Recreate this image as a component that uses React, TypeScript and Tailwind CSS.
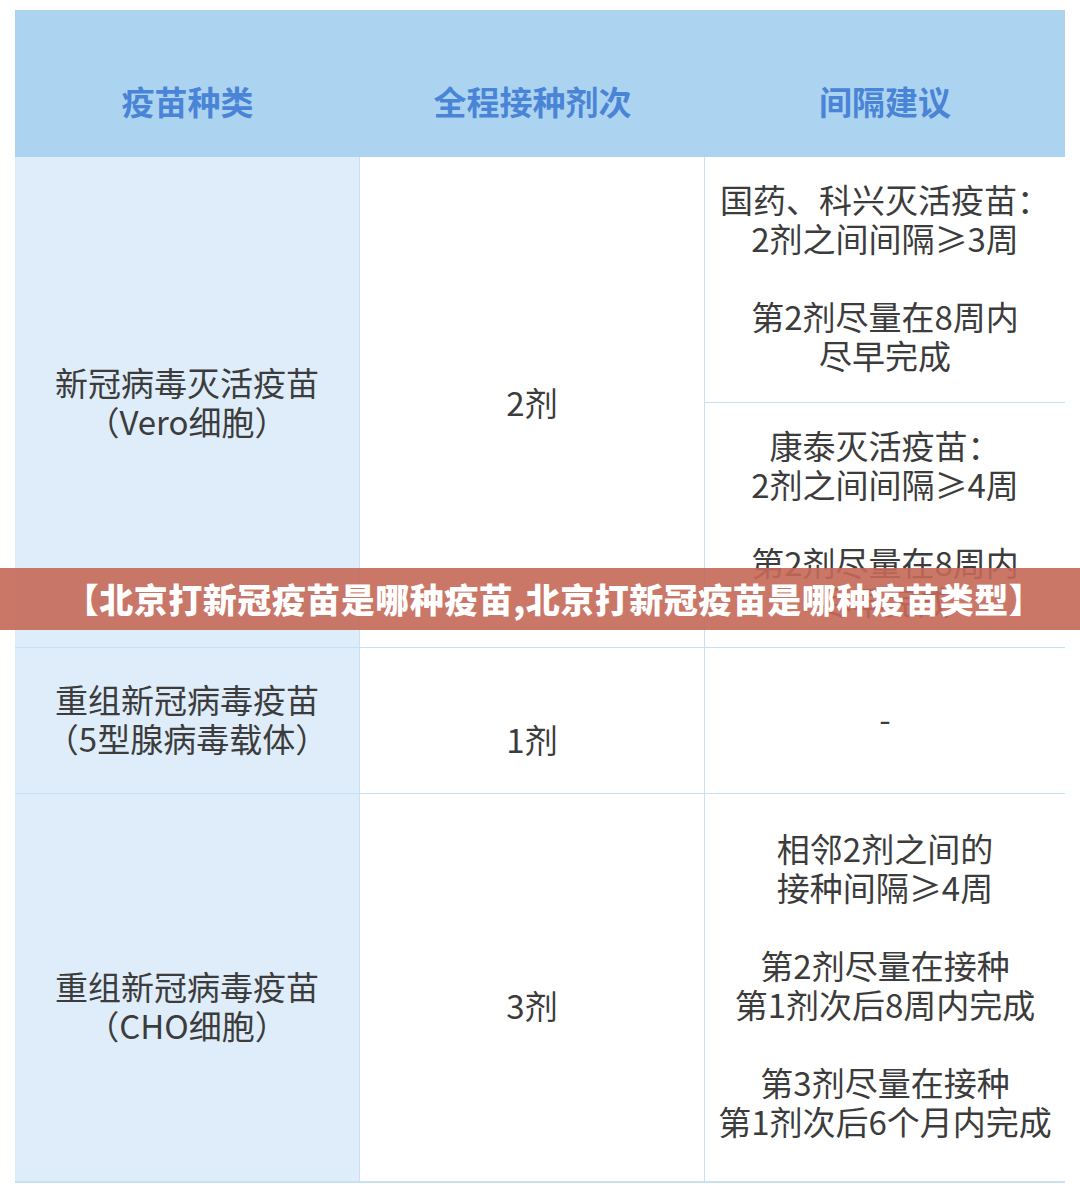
import React from 'react';

const font = { fontFamily: '"Noto Sans CJK SC", "Noto Sans", sans-serif' };

const Lines = ({ lines }: { lines: string[] }) => (
  <div className="text-center">
    {lines.map((l, i) => (
      <div key={i} className="h-[39px] whitespace-nowrap">
        {l}
      </div>
    ))}
  </div>
);

export default function App() {
  return (
    <div className="relative w-[1080px] h-[1199px] bg-white" style={font}>
      <div className="pt-[10px] pl-[15px]">
        <div className="w-[1050px] border-b-2 border-[#c6e0f4]">
          {/* Header */}
          <div className="grid grid-cols-[345px_345px_360px] h-[147px] bg-[#acd4f0] text-[33px] font-bold text-[#4a84d6] leading-[39px]">
            <div className="flex items-center justify-center pt-[36px]">疫苗种类</div>
            <div className="flex items-center justify-center pt-[36px]">全程接种剂次</div>
            <div className="flex items-center justify-center pt-[36px]">间隔建议</div>
          </div>

          {/* Body */}
          <div className="grid grid-cols-[344px_344px_360px] grid-rows-[245px_244px_145px_387px] gap-px bg-[#c6e0f4] text-[33px] leading-[39px] text-[#3c3c3c]">
            <div className="row-span-2 flex items-center justify-center bg-[#deedf9]">
              <Lines lines={['新冠病毒灭活疫苗', '（Vero细胞）']} />
            </div>
            <div className="row-span-2 flex items-center justify-center bg-white">
              <Lines lines={['2剂']} />
            </div>
            <div className="flex items-center justify-center bg-white pb-[4px]">
              <Lines lines={['国药、科兴灭活疫苗：', '2剂之间间隔≥3周', '', '第2剂尽量在8周内', '尽早完成']} />
            </div>
            <div className="flex items-center justify-center bg-white pb-[4px]">
              <Lines lines={['康泰灭活疫苗：', '2剂之间间隔≥4周', '', '第2剂尽量在8周内', '尽早完成']} />
            </div>

            <div className="flex items-center justify-center bg-[#deedf9] pb-[4px]">
              <Lines lines={['重组新冠病毒疫苗', '（5型腺病毒载体）']} />
            </div>
            <div className="flex items-center justify-center bg-white pt-[38px]">
              <Lines lines={['1剂']} />
            </div>
            <div className="flex items-center justify-center bg-white pb-[4px]">
              <Lines lines={['-']} />
            </div>

            <div className="flex items-center justify-center bg-[#deedf9] pt-[36px]">
              <Lines lines={['重组新冠病毒疫苗', '（CHO细胞）']} />
            </div>
            <div className="flex items-center justify-center bg-white pt-[36px]">
              <Lines lines={['3剂']} />
            </div>
            <div className="flex items-center justify-center bg-white pb-[6px]">
              <Lines
                lines={[
                  '相邻2剂之间的',
                  '接种间隔≥4周',
                  '',
                  '第2剂尽量在接种',
                  '第1剂次后8周内完成',
                  '',
                  '第3剂尽量在接种',
                  '第1剂次后6个月内完成',
                ]}
              />
            </div>
          </div>
        </div>
      </div>

      {/* Title banner */}
      <div className="absolute left-0 top-[568px] w-[1080px] h-[62px] bg-[#c46858]/90 flex items-center justify-center">
        <span className="text-[34px] font-black text-white leading-none whitespace-nowrap pl-[28px] tracking-[0.5px]">
          【北京打新冠疫苗是哪种疫苗,北京打新冠疫苗是哪种疫苗类型】
        </span>
      </div>
    </div>
  );
}
